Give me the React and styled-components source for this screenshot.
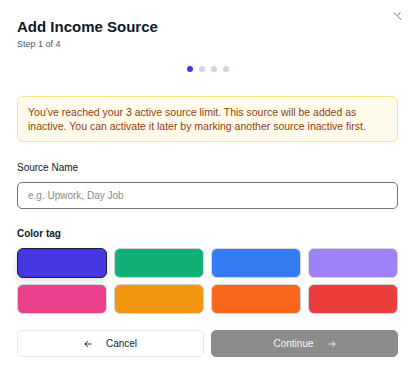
import React, { useState } from 'react';
import styled, { createGlobalStyle } from 'styled-components';

const GlobalStyle = createGlobalStyle`
  html, body {
    margin: 0;
    background: #ffffff;
    font-family: 'Liberation Sans', Arial, sans-serif;
  }
`;

const Modal = styled.div`
  position: relative;
  width: 415px;
  height: 370px;
  box-sizing: border-box;
  padding: 18px 17px 0;
  background: #ffffff;
  color: #111827;
`;

const CloseButton = styled.button`
  position: absolute;
  top: 11px;
  right: 12px;
  width: 10px;
  height: 10px;
  padding: 0;
  border: 0;
  background: none;
  color: #7a7a7a;
  display: flex;
`;

const Title = styled.h2`
  margin: 0;
  font-size: 15px;
  line-height: 18px;
  font-weight: 700;
  color: #111827;
`;

const StepText = styled.div`
  margin-top: 2px;
  font-size: 9px;
  line-height: 12px;
  color: #4b5563;
`;

const Dots = styled.div`
  display: flex;
  justify-content: center;
  gap: 6px;
  margin: 16px 0 24px;
`;

const Dot = styled.span`
  width: 6px;
  height: 6px;
  border-radius: 50%;
  background: ${({ $active }) => ($active ? '#4338e0' : '#cbd5e1')};
`;

const Notice = styled.div`
  padding: 8px 10px;
  border: 1px solid #fde68a;
  border-radius: 6px;
  background: #fffbeb;
  color: #92400e;
  font-size: 10.5px;
  line-height: 14px;
`;

const Label = styled.div`
  font-size: 10px;
  line-height: 14px;
  font-weight: ${({ $bold }) => ($bold ? 700 : 400)};
  color: #111827;
  margin: ${({ $top }) => $top}px 0 7px;
`;

const TextInput = styled.input`
  display: block;
  width: 100%;
  height: 27px;
  box-sizing: border-box;
  padding: 0 10px;
  border: 1px solid #747474;
  border-radius: 5px;
  font-family: inherit;
  font-size: 10px;
  color: #111827;
  outline: none;

  &::placeholder {
    color: #8a8a8a;
  }
`;

const SwatchGrid = styled.div`
  display: grid;
  grid-template-columns: repeat(4, 1fr);
  column-gap: 7px;
  row-gap: 6px;
`;

const Swatch = styled.button`
  height: 30px;
  padding: 0;
  border-radius: 6px;
  background: ${({ $color }) => $color};
  border: 1px solid ${({ $selected }) => ($selected ? '#1e1b3a' : '#d4d4dc')};
  box-shadow: ${({ $selected }) => ($selected ? '0 3px 8px rgba(0, 0, 0, 0.14)' : 'none')};
  cursor: pointer;
`;

const Actions = styled.div`
  display: grid;
  grid-template-columns: 1fr 1fr;
  gap: 7px;
  margin-top: 16px;
`;

const ActionButton = styled.button`
  display: flex;
  align-items: center;
  justify-content: center;
  gap: 14px;
  height: 27px;
  border-radius: 5px;
  font-family: inherit;
  font-size: 10px;
  border: 1px solid ${({ $primary }) => ($primary ? '#8c8c8c' : '#e5e7eb')};
  background: ${({ $primary }) => ($primary ? '#8c8c8c' : '#ffffff')};
  color: ${({ $primary }) => ($primary ? '#f3f4f6' : '#111827')};

  svg {
    flex: none;
  }
`;

const colors = [
  '#4438e0',
  '#12b076',
  '#357cf2',
  '#9d82f7',
  '#ea418d',
  '#f29511',
  '#f7661c',
  '#ec3d3d',
];

const ArrowLeft = () => (
  <svg width="8" height="8" viewBox="0 0 8 8" fill="none" stroke="currentColor" strokeWidth="0.9">
    <path d="M7.5 4H0.8M3.8 1L0.8 4L3.8 7" />
  </svg>
);

const ArrowRight = () => (
  <svg width="8" height="8" viewBox="0 0 8 8" fill="none" stroke="currentColor" strokeWidth="0.9">
    <path d="M0.5 4H7.2M4.2 1L7.2 4L4.2 7" />
  </svg>
);

export default function App() {
  const [selected, setSelected] = useState(0);

  return (
    <>
      <GlobalStyle />
      <Modal>
        <CloseButton aria-label="Close">
          <svg width="10" height="10" viewBox="0 0 10 10" fill="none" stroke="currentColor" strokeWidth="1">
            <path d="M1 1.5L8.5 9M7.5 1L5 4.5" />
          </svg>
        </CloseButton>

        <Title>Add Income Source</Title>
        <StepText>Step 1 of 4</StepText>

        <Dots>
          {[0, 1, 2, 3].map((i) => (
            <Dot key={i} $active={i === 0} />
          ))}
        </Dots>

        <Notice>
          You've reached your 3 active source limit. This source will be added as inactive. You can
          activate it later by marking another source inactive first.
        </Notice>

        <Label $top={19}>Source Name</Label>
        <TextInput placeholder="e.g. Upwork, Day Job" />

        <Label $top={18} $bold>
          Color tag
        </Label>
        <SwatchGrid>
          {colors.map((c, i) => (
            <Swatch key={c} $color={c} $selected={i === selected} onClick={() => setSelected(i)} />
          ))}
        </SwatchGrid>

        <Actions>
          <ActionButton>
            <ArrowLeft />
            Cancel
          </ActionButton>
          <ActionButton $primary>
            Continue
            <ArrowRight />
          </ActionButton>
        </Actions>
      </Modal>
    </>
  );
}
